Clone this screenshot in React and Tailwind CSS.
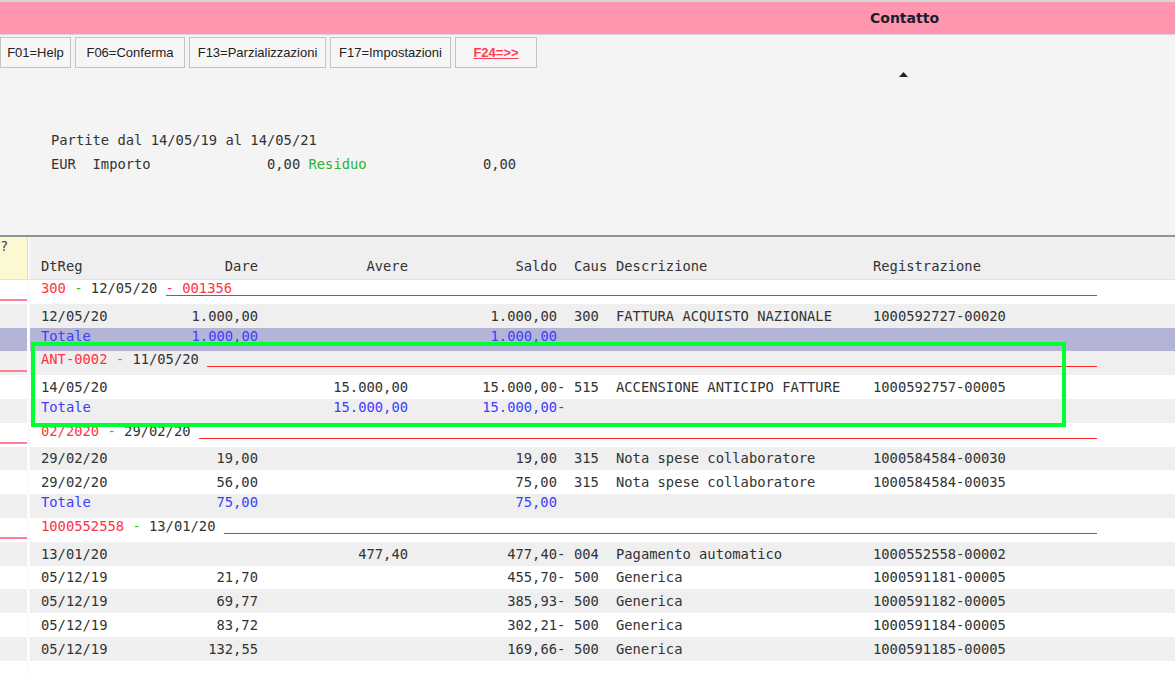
import React from "react";

const MONO = "font-['DejaVu_Sans_Mono',monospace] text-[13.8px]";

const groups = [
  {
    code: "300",
    date: "12/05/20",
    extra: "- 001356",
    rows: [["12/05/20", "1.000,00", "", "1.000,00", " ", "300", "FATTURA ACQUISTO NAZIONALE", "1000592727-00020"]],
    tot: ["1.000,00", "", "1.000,00", " "],
    selected: true,
  },
  {
    code: "ANT-0002",
    date: "11/05/20",
    rows: [["14/05/20", "", "15.000,00", "15.000,00", "-", "515", "ACCENSIONE ANTICIPO FATTURE", "1000592757-00005"]],
    tot: ["", "15.000,00", "15.000,00", "-"],
  },
  {
    code: "02/2020",
    date: "29/02/20",
    rows: [
      ["29/02/20", "19,00", "", "19,00", " ", "315", "Nota spese collaboratore", "1000584584-00030"],
      ["29/02/20", "56,00", "", "75,00", " ", "315", "Nota spese collaboratore", "1000584584-00035"],
    ],
    tot: ["75,00", "", "75,00", " "],
  },
  {
    code: "1000552558",
    date: "13/01/20",
    rows: [
      ["13/01/20", "", "477,40", "477,40", "-", "004", "Pagamento automatico", "1000552558-00002"],
      ["05/12/19", "21,70", "", "455,70", "-", "500", "Generica", "1000591181-00005"],
      ["05/12/19", "69,77", "", "385,93", "-", "500", "Generica", "1000591182-00005"],
      ["05/12/19", "83,72", "", "302,21", "-", "500", "Generica", "1000591184-00005"],
      ["05/12/19", "132,55", "", "169,66", "-", "500", "Generica", "1000591185-00005"],
    ],
  },
];

const buttons = [
  { label: "F01=Help", w: "w-[71px]" },
  { label: "F06=Conferma", w: "w-[110px]" },
  { label: "F13=Parzializzazioni", w: "w-[137px]" },
  { label: "F17=Impostazioni", w: "w-[121px]" },
];

const Cols = ({ c }) => (
  <>
    <div className="w-[119px]">{c[0]}</div>
    <div className="w-[98px] text-right">{c[1]}</div>
    <div className="w-[150px] text-right">{c[2]}</div>
    <div className="w-[149px] text-right">{c[3]}</div>
    <div className="w-[9px]">{c[4]}</div>
    <div className="w-[50px] pl-[8px]">{c[5]}</div>
    <div className="w-[257px]">{c[6]}</div>
    <div>{c[7]}</div>
  </>
);

const Row = ({ bg, mark, children }) => (
  <div className={`flex h-[23.8px] ${bg}`}>
    <div className="w-[27px] flex flex-col justify-end pb-[3px]">
      {mark && <div className="h-[2px] bg-[#ff7f99]" />}
    </div>
    <div className="w-[3px] bg-[#fbfbfb]" />
    <div className="flex-1 pl-[11px] flex min-w-0">{children}</div>
  </div>
);

export default function App() {
  // flatten rows so the stripes alternate like the original grid
  const flat = [];
  groups.forEach((g) => {
    flat.push({ kind: "group", g });
    g.rows.forEach((r) => flat.push({ kind: "data", r }));
    if (g.tot) flat.push({ kind: "tot", t: g.tot, selected: g.selected });
  });
  flat.push({ kind: "empty" });

  return (
    <div className="w-[1175px] h-[674px] overflow-hidden bg-white text-[#333]">
      {/* Top panel */}
      <div className="h-[235px] bg-[#f4f4f4] flex flex-col">
        <div className="h-[35px] border-t-2 border-b border-[#d6d6d6] bg-[#ff96ae] flex items-center pl-[870px]">
          <span className="font-['DejaVu_Sans',sans-serif] font-bold text-[14px] text-[#1c1c2c]">Contatto</span>
        </div>

        <div className="mt-[2px] flex gap-[4px] h-[31px] font-['Liberation_Sans',sans-serif] text-[13px] text-[#222]">
          {buttons.map((b) => (
            <div key={b.label} className={`${b.w} border border-[#c3c3c3] bg-[#f6f6f6] flex items-center justify-center`}>
              {b.label}
            </div>
          ))}
          <div className="w-[82px] border border-[#c3c3c3] bg-[#f6f6f6] flex items-center justify-center font-bold text-[#ff3d50] underline">
            F24=&gt;&gt;
          </div>
        </div>

        <div className="mt-[4px] pl-[899px]">
          <svg width="9" height="5" viewBox="0 0 9 5" className="block">
            <path d="M4.5 0 L9 5 L0 5 Z" fill="#222" />
          </svg>
        </div>

        <div className={`mt-[51px] pl-[51px] ${MONO} leading-[24px] whitespace-pre`}>
          <div>Partite dal 14/05/19 al 14/05/21</div>
          <div>
            {"EUR  Importo              0,00 "}
            <span className="text-[#2cb52c]">Residuo</span>
            {"              0,00"}
          </div>
        </div>
      </div>

      {/* Grid */}
      <div className={`relative border-t-2 border-[#939393] ${MONO} whitespace-pre`}>
        <div className="flex h-[43px] bg-[#efefef] border-b border-[#e2e2e2]">
          <div className="w-[27px] bg-[#fcf8d1] leading-[14px] pt-[2px] text-[#444]">
            <span className="block">?</span>
          </div>
          <div className="w-[3px] bg-[#fafafa] border-l border-[#d9d9d9]" />
          <div className="flex-1 pl-[11px] flex items-end pb-[5px] leading-[16px]">
            <Cols c={["DtReg", "Dare", "Avere", "Saldo", "", "Caus", "Descrizione", "Registrazione"]} />
          </div>
        </div>

        {flat.map((it, i) => {
          const bg = it.selected ? "bg-[#b4b4d9]" : i % 2 === 0 ? "bg-white" : "bg-[#efefef]";
          if (it.kind === "group") {
            return (
              <Row key={i} bg={bg} mark>
                <div className="flex items-start pt-[1px] pr-[78px] w-full leading-[14px]">
                  <span className="text-[#ff3344]">{it.g.code}</span>
                  <span className="text-[#26c426]"> - </span>
                  <span>{it.g.date} </span>
                  <div className="flex-1 h-[15px] border-b border-[#ff2a2a] text-[#ff3344]">
                    {it.g.extra}
                  </div>
                </div>
              </Row>
            );
          }
          if (it.kind === "data") {
            return (
              <Row key={i} bg={bg}>
                <div className="flex items-center leading-[16px]">
                  <Cols c={it.r} />
                </div>
              </Row>
            );
          }
          if (it.kind === "tot") {
            return (
              <Row key={i} bg={bg}>
                <div className="flex items-start leading-[16px] text-[#3d3dff]">
                  <Cols c={["Totale", ...it.t, "", "", ""]} />
                </div>
              </Row>
            );
          }
          return <Row key={i} bg={bg} />;
        })}

        {/* highlight frame drawn over the ANT-0002 block */}
        <div className="absolute left-[31px] top-[105px] w-[1035px] h-[85px] border-[4px] border-[#00ff33] pointer-events-none" />
      </div>
    </div>
  );
}
